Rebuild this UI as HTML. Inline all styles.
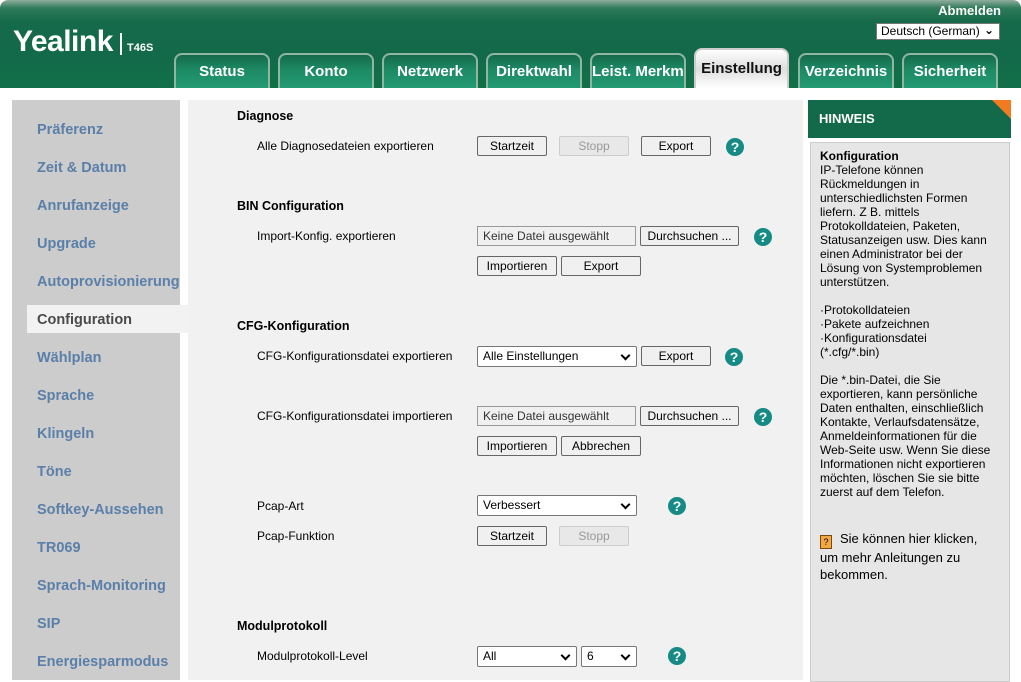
<!DOCTYPE html>
<html><head><meta charset="utf-8"><style>
*{margin:0;padding:0;box-sizing:border-box}
body{width:1021px;height:680px;overflow:hidden;background:#fff;font-family:"Liberation Sans","DejaVu Sans",sans-serif;position:relative}
.hdr{position:absolute;left:0;top:0;width:1021px;height:88px;background:linear-gradient(#8fae9c 0px,#2f7a5a 8px,#146a4a 22px,#136a4a 60px,#127048 88px);border-radius:8px 8px 0 0}
.logo{position:absolute;left:13px;top:25px;color:#fff;font-size:30px;font-weight:bold;letter-spacing:-0.5px}
.model{position:absolute;left:120px;top:33px;border-left:2px solid #fff;padding-left:5px;height:22px;color:#fff;font-size:11px;font-weight:bold;line-height:30px}
.tab{position:absolute;top:53px;height:35px;width:96px;border:2px solid #8fb5a3;border-bottom:none;border-radius:8px 8px 0 0;background:linear-gradient(#156a4c,#1d8a64 45%,#239a72);color:#fff;font-weight:bold;font-size:15px;text-align:center;line-height:34px;overflow:hidden;white-space:nowrap}
.tab.act{top:48px;height:40px;background:linear-gradient(#fff,#ddd 50%,#fff);color:#111;border-color:#ccc;line-height:38px}
.abm{position:absolute;right:20px;top:3px;color:#fff;font-weight:bold;font-size:13px}
.lang{position:absolute;left:876px;top:23px;width:124px;height:17px;background:#fff;border:1px solid #777;font-size:12px;line-height:15px;padding-left:4px;color:#000}
.side{position:absolute;left:12px;top:100px;width:168px;height:580px;background:#cccccc}
.si{position:absolute;left:37px;color:#5a7fa8;font-weight:bold;font-size:14.5px;white-space:nowrap}
.sact{position:absolute;left:27px;top:305px;width:161px;height:28px;background:#f2f2f2}
.main{position:absolute;left:188px;top:100px;width:615px;height:580px;background:#f1f1f1}
.h{position:absolute;left:237px;font-weight:bold;font-size:12.5px;color:#000}
.l{position:absolute;left:257px;font-size:12px;color:#000}
.b{position:absolute;height:20px;border:1px solid #666;border-radius:2px;background:#f0f0f0;font-size:12px;text-align:center;line-height:18px;color:#000}
.b.d{border-color:#ccc;color:#999;background:#e8e8e8}
.f{position:absolute;height:20px;border:1px solid #999;background:#f0f0f0;font-size:12px;line-height:18px;padding-left:5px;color:#333}
.s{position:absolute;height:21px;border:1px solid #777;border-radius:2px;background:#fff;font-size:12px;line-height:19px;padding-left:5px;color:#000}
.s::after{content:"";position:absolute;right:7px;top:5px;width:5px;height:5px;border-right:2px solid #000;border-bottom:2px solid #000;transform:rotate(45deg)}
.q{position:absolute;width:18px;height:18px;border-radius:50%;background:#168a85;color:#fff;font-weight:bold;font-size:14px;text-align:center;line-height:18px}
.hh{position:absolute;left:808px;top:100px;width:203px;height:38px;background:#136a4a;color:#fff;font-weight:bold;font-size:13px;line-height:38px;padding-left:11px;overflow:hidden}
.hh::after{content:"";position:absolute;right:0;top:0;border-top:19px solid #f27a1f;border-left:19px solid transparent}
.hb{position:absolute;left:810px;top:142px;width:200px;height:540px;background:#e6e6e6;border:1px solid #ccc}
.ht{position:absolute;left:820px;top:149px;width:172px;font-size:12px;line-height:14px;color:#000}
</style></head><body>
<div class="hdr"></div>
<div class="logo">Yealink</div>
<div class="model">T46S</div>
<div class="abm">Abmelden</div>
<div class="lang">Deutsch (German)<span style="position:absolute;right:5px;top:-1px;font-weight:bold">⌄</span></div>
<div class="tab" style="left:174px">Status</div>
<div class="tab" style="left:278px">Konto</div>
<div class="tab" style="left:382px">Netzwerk</div>
<div class="tab" style="left:486px">Direktwahl</div>
<div class="tab" style="left:590px">Leist. Merkmale</div>
<div class="tab act" style="left:694px;width:95px">Einstellung</div>
<div class="tab" style="left:798px">Verzeichnis</div>
<div class="tab" style="left:902px">Sicherheit</div>

<div class="side"></div>
<div class="sact"></div>
<div class="main"></div>
<div class="si" style="top:122px">Präferenz</div>
<div class="si" style="top:160px">Zeit &amp; Datum</div>
<div class="si" style="top:198px">Anrufanzeige</div>
<div class="si" style="top:236px">Upgrade</div>
<div class="si" style="top:274px;width:143px;overflow:hidden">Autoprovisionierung</div>
<div class="si" style="top:312px;color:#4a4a4a">Configuration</div>
<div class="si" style="top:350px">Wählplan</div>
<div class="si" style="top:388px">Sprache</div>
<div class="si" style="top:426px">Klingeln</div>
<div class="si" style="top:464px">Töne</div>
<div class="si" style="top:502px">Softkey-Aussehen</div>
<div class="si" style="top:540px">TR069</div>
<div class="si" style="top:578px">Sprach-Monitoring</div>
<div class="si" style="top:616px">SIP</div>
<div class="si" style="top:654px">Energiesparmodus</div>

<div class="h" style="top:109px">Diagnose</div>
<div class="l" style="top:139px">Alle Diagnosedateien exportieren</div>
<div class="b" style="left:477px;top:136px;width:70px">Startzeit</div>
<div class="b d" style="left:559px;top:136px;width:70px">Stopp</div>
<div class="b" style="left:641px;top:136px;width:70px">Export</div>
<div class="q" style="left:726px;top:138px">?</div>

<div class="h" style="top:199px">BIN Configuration</div>
<div class="l" style="top:229px">Import-Konfig. exportieren</div>
<div class="f" style="left:477px;top:226px;width:159px">Keine Datei ausgewählt</div>
<div class="b" style="left:640px;top:226px;width:99px">Durchsuchen ...</div>
<div class="q" style="left:754px;top:228px">?</div>
<div class="b" style="left:477px;top:256px;width:80px">Importieren</div>
<div class="b" style="left:561px;top:256px;width:80px">Export</div>

<div class="h" style="top:319px">CFG-Konfiguration</div>
<div class="l" style="top:349px">CFG-Konfigurationsdatei exportieren</div>
<div class="s" style="left:477px;top:346px;width:160px">Alle Einstellungen</div>
<div class="b" style="left:641px;top:346px;width:70px">Export</div>
<div class="q" style="left:725px;top:348px">?</div>

<div class="l" style="top:409px">CFG-Konfigurationsdatei importieren</div>
<div class="f" style="left:477px;top:406px;width:159px">Keine Datei ausgewählt</div>
<div class="b" style="left:640px;top:406px;width:99px">Durchsuchen ...</div>
<div class="q" style="left:754px;top:408px">?</div>
<div class="b" style="left:477px;top:436px;width:80px">Importieren</div>
<div class="b" style="left:561px;top:436px;width:80px">Abbrechen</div>

<div class="l" style="top:499px">Pcap-Art</div>
<div class="s" style="left:477px;top:495px;width:160px">Verbessert</div>
<div class="q" style="left:668px;top:497px">?</div>
<div class="l" style="top:529px">Pcap-Funktion</div>
<div class="b" style="left:477px;top:526px;width:70px">Startzeit</div>
<div class="b d" style="left:559px;top:526px;width:70px">Stopp</div>

<div class="h" style="top:619px">Modulprotokoll</div>
<div class="l" style="top:649px">Modulprotokoll-Level</div>
<div class="s" style="left:477px;top:646px;width:100px">All</div>
<div class="s" style="left:581px;top:646px;width:56px">6</div>
<div class="q" style="left:668px;top:647px">?</div>

<div class="hh">HINWEIS</div>
<div class="hb"></div>
<div class="ht"><b>Konfiguration</b><br>IP-Telefone können Rückmeldungen in unterschiedlichsten Formen liefern. Z B. mittels Protokolldateien, Paketen, Statusanzeigen usw. Dies kann einen Administrator bei der Lösung von Systemproblemen unterstützen.<br><br>·Protokolldateien<br>·Pakete aufzeichnen<br>·Konfigurationsdatei<br>(*.cfg/*.bin)<br><br>Die *.bin-Datei, die Sie exportieren, kann persönliche Daten enthalten, einschließlich Kontakte, Verlaufsdatensätze, Anmeldeinformationen für die Web-Seite usw. Wenn Sie diese Informationen nicht exportieren möchten, löschen Sie sie bitte zuerst auf dem Telefon.<br><br><br></div>
<div style="position:absolute;left:820px;top:530px;width:185px;font-size:13px;line-height:17px;color:#000"><span style="display:inline-block;width:12px;height:14px;background:#f5a742;border:1px solid #7a4a10;font-size:9px;line-height:12px;text-align:center;vertical-align:-2px;margin-right:8px">?</span>Sie können hier klicken,<br>um mehr Anleitungen zu<br>bekommen.</div>
</body></html>
